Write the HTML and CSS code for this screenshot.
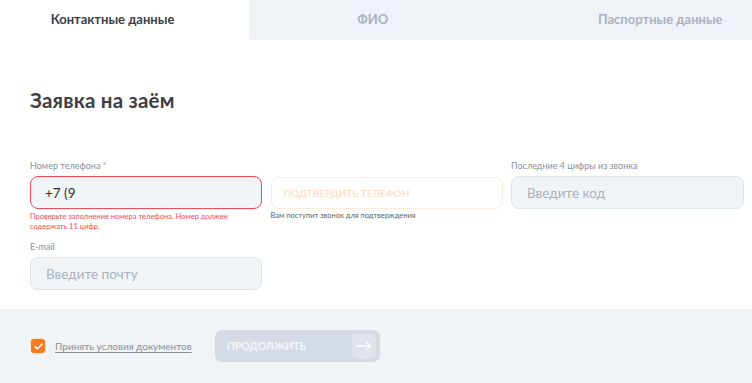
FILE: index.html
```html
<!DOCTYPE html>
<html lang="ru">
<head>
<meta charset="utf-8">
<link rel="stylesheet" href="styles.css">
</head>
<body>
<div class="tabs">
  <div class="tab active">Контактные данные</div>
  <div class="tab">ФИО</div>
  <div class="tab">Паспортные данные</div>
</div>
<main class="form">
  <h1 class="title">Заявка на заём</h1>
  <div class="grid">
    <div class="field">
      <label class="label">Номер телефона <span class="req">*</span></label>
      <div class="input error">+7 (9</div>
      <div class="err-msg">Проверьте заполнение номера телефона. Номер должен содержать 11 цифр.</div>
    </div>
    <div class="field">
      <label class="label">&nbsp;</label>
      <button class="confirm">ПОДТВЕРДИТЬ ТЕЛЕФОН</button>
      <div class="hint">Вам поступит звонок для подтверждения</div>
    </div>
    <div class="field">
      <label class="label">Последние 4 цифры из звонка</label>
      <div class="input placeholder">Введите код</div>
    </div>
    <div class="field">
      <label class="label">E-mail</label>
      <div class="input placeholder">Введите почту</div>
    </div>
  </div>
</main>
<footer class="footer">
  <label class="agree">
    <span class="checkbox"><svg width="9" height="7" viewBox="0 0 9 7"><path d="M1 3.5 L3.4 5.8 L8 1.2" fill="none" stroke="#fff" stroke-width="1.6" stroke-linecap="round" stroke-linejoin="round"/></svg></span>
    <span class="agree-text">Принять условия документов</span>
  </label>
  <button class="next">
    <span>ПРОДОЛЖИТЬ</span>
    <span class="arrow"><svg width="16" height="10" viewBox="0 0 16 10"><path d="M1 5 H14.5 M10.5 1 L14.5 5 L10.5 9" fill="none" stroke="#fff" stroke-width="1.3" stroke-linecap="round" stroke-linejoin="round"/></svg></span>
  </button>
</footer>
</body>
</html>
```
FILE: styles.css
```css
* { box-sizing: border-box; }
html, body { margin: 0; padding: 0; }
body {
  width: 752px;
  height: 383px;
  overflow: hidden;
  background: #fff;
  font-family: Lato, "Noto Sans", sans-serif;
  color: #3b3e44;
}
.tabs {
  display: grid;
  grid-template-columns: 249px 1fr 1fr;
  height: 40px;
  background: #eff3f7;
}
.tab {
  display: flex;
  align-items: center;
  justify-content: center;
  font-size: 13px;
  font-weight: 700;
  color: #aab2bf;
  padding-bottom: 3px;
}
.tab:nth-child(2) { padding-right: 4px; }
.tab:nth-child(3) { padding-left: 68px; }
.tab.active { background: #fff; color: #3b3e44; padding-right: 24px; }
.form {
  padding: 46px 8px 0 30px;
  height: 269px;
}
.title {
  margin: 0;
  font-size: 20.5px;
  font-weight: 700;
  line-height: 28px;
  color: #3b3e44;
  letter-spacing: 0.2px;
}
.grid {
  margin-top: 46px;
  display: grid;
  grid-template-columns: 232px 232px 233px;
  column-gap: 8.5px;
  row-gap: 10px;
}
.field { display: flex; flex-direction: column; }
.label {
  font-size: 9px;
  line-height: 12px;
  color: #8a8f98;
  margin-bottom: 4px;
}
.req { color: #f0716f; }
.input {
  height: 33px;
  border: 1px solid #dde3ea;
  border-radius: 8px;
  background: #f1f4f7;
  display: flex;
  align-items: center;
  padding: 0 14px;
  font-size: 13.5px;
  color: #2f3237;
}
.input.placeholder { color: #a9b1bd; padding-left: 15px; }
.input.error { border: 1.5px solid #ef4a56; }
.err-msg {
  margin-top: 3px;
  font-size: 7.5px;
  line-height: 9.5px;
  color: #ef4a56;
  padding-right: 20px;
}
.confirm {
  height: 32px;
  margin-top: 1px;
  border: 1px solid #fdeadb;
  border-radius: 8px;
  background: #fff;
  font-family: inherit;
  font-size: 10px;
  font-weight: 700;
  color: #fde0c9;
  text-align: left;
  padding: 0 12px;
}
.hint {
  margin-top: 2px;
  font-size: 7.5px;
  line-height: 9px;
  color: #5a5f67;
}
.footer {
  height: 74px;
  background: #f1f4f7;
  display: flex;
  align-items: center;
  padding: 0 0 0 31px;
}
.agree {
  display: flex;
  align-items: center;
  gap: 10px;
  width: 184px;
}
.checkbox {
  width: 14px;
  height: 14px;
  border-radius: 3px;
  background: #f47b20;
  box-shadow: 0 0 0 1px #fde3cf;
  display: flex;
  align-items: center;
  justify-content: center;
}
.agree-text {
  font-size: 10px;
  color: #8a8f98;
  text-decoration: underline;
  text-underline-offset: 2px;
}
.next {
  width: 165px;
  height: 32px;
  border: none;
  border-radius: 7px;
  background: #d5dbe4;
  display: flex;
  align-items: center;
  justify-content: space-between;
  padding: 0 4px 0 12px;
  font-family: inherit;
  font-size: 10.5px;
  font-weight: 700;
  color: #f4f6f9;
}
.arrow {
  width: 24px;
  height: 25px;
  border-radius: 5px;
  background: #dfe4ea;
  display: flex;
  align-items: center;
  justify-content: center;
}
```
